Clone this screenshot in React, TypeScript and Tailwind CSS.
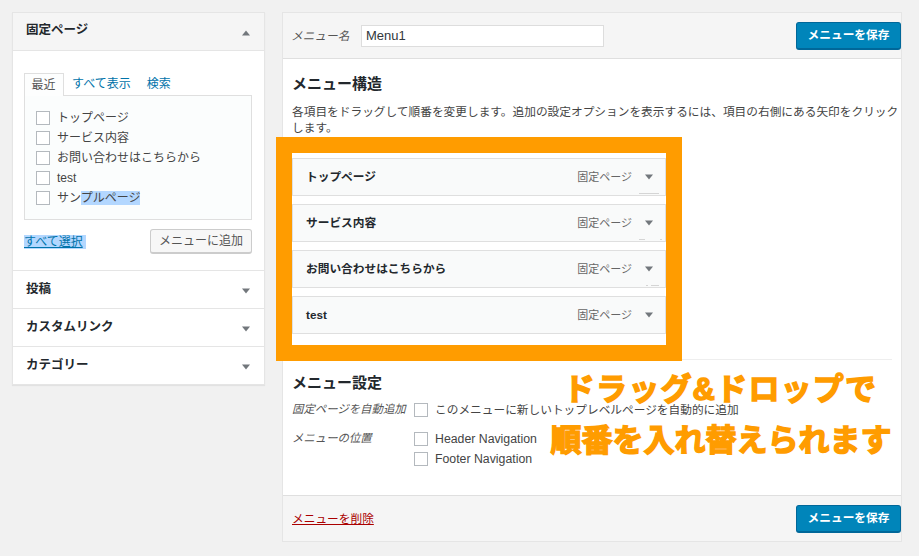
const font = { fontFamily: '"Liberation Sans","Noto Sans CJK JP",sans-serif' };

function Arrow({ up = false }: { up?: boolean }) {
  return (
    <svg width="8" height="6" viewBox="0 0 8 6" className="shrink-0">
      <path d={up ? "M4 0.5 L8 5.5 L0 5.5 Z" : "M0 0.5 L8 0.5 L4 5.5 Z"} fill="#72777c" />
    </svg>
  );
}

function Check({ className = "" }: { className?: string }) {
  return <span className={`block w-[14px] h-[14px] shrink-0 bg-white border border-[#b4b9be] ${className}`} />;
}

function SaveButton() {
  return (
    <button className="w-[105px] h-[28px] rounded-[3px] bg-[#0085ba] border border-[#006799] border-b-2 text-white text-[11.7px] font-bold flex items-center justify-center">
      メニューを保存
    </button>
  );
}

function Accordion({ title }: { title: string }) {
  return (
    <div className="h-[38px] border-t border-[#e5e5e5] pl-[13px] pr-[14px] flex items-center justify-between bg-white">
      <span className="text-[12.5px] font-bold text-[#23282d] -mt-[1px]">{title}</span>
      <span className="mt-[2px]"><Arrow /></span>
    </div>
  );
}

function MenuItem({ title, marks }: { title: string; marks: number[][] }) {
  return (
    <div className="relative h-[38px] border border-[#dfdfdf] bg-[#f9fafa] flex items-center pl-[13px] pr-[12px] mb-[8px]">
      <span className="text-[11.7px] font-bold text-[#23282d] flex-1">{title}</span>
      <span className="text-[11px] text-[#666] mr-[13px]">固定ページ</span>
      <Arrow />
      {marks.map(([right, width]) => (
        <span key={right} className="absolute bottom-[1px] h-[1px] bg-[#d5d5d5]" style={{ right, width }} />
      ))}
    </div>
  );
}

export default function App() {
  return (
    <div className="relative w-[919px] h-[556px] overflow-hidden bg-[#f1f1f1] text-[#444] flex items-start pt-[12px] pl-[12px] gap-[17px]" style={font}>
      {/* Left column */}
      <div className="w-[253px] border border-[#e5e5e5] shadow-[0_1px_1px_rgba(0,0,0,0.06)] bg-white">
        <div className="h-[38px] bg-[#f5f5f5] border-b border-[#e5e5e5] pl-[13px] pr-[14px] flex items-center justify-between">
          <span className="text-[12.5px] font-bold text-[#23282d] -mt-[2px]">固定ページ</span>
          <span className="mt-[2px]"><Arrow up /></span>
        </div>
        <div className="h-[219px] pl-[11px] pr-[12px] pt-[22px]">
          <div className="flex h-[23px] text-[12px] text-[#0073aa]">
            <span className="w-[40px] h-[23px] bg-[#fdfefe] border border-b-0 border-[#dfdfdf] text-[#555] flex items-center justify-center relative z-10 pr-[1px]">最近</span>
            <span className="ml-[8px] -mt-[1px] flex items-center">すべて表示</span>
            <span className="ml-[16px] -mt-[1px] flex items-center">検索</span>
          </div>
          <div className="h-[125px] -mt-[1px] border border-[#dfdfdf] bg-[#fbfdfd] pt-[12px] pl-[11px] text-[12px] text-[#444]">
            {["トップページ", "サービス内容", "お問い合わせはこちらから", "test"].map((t) => (
              <div key={t} className="h-[20px] flex items-center gap-[7px]"><Check /><span>{t}</span></div>
            ))}
            <div className="h-[20px] flex items-center gap-[7px]">
              <Check />
              <span>サン<span className="bg-[#b3d7ff]">プルページ</span></span>
            </div>
          </div>
          <div className="flex items-center justify-between mt-[9px]">
            <span className="text-[12px] text-[#0073aa] underline bg-[#b3d7ff] h-[14px] leading-[14px] w-[62px]">すべて選択</span>
            <button className="w-[102px] h-[25px] border border-[#cccccc] border-b-2 rounded-[3px] bg-[#f7f7f7] text-[12px] text-[#555] flex items-center justify-center">メニューに追加</button>
          </div>
        </div>
        <Accordion title="投稿" />
        <Accordion title="カスタムリンク" />
        <Accordion title="カテゴリー" />
      </div>

      {/* Right column */}
      <div className="w-[620px] h-[530px] border border-[#e5e5e5] bg-white flex flex-col">
        <div className="h-[46px] shrink-0 bg-[#f5f5f5] border-b border-[#dfdfdf] pl-[9px] flex items-center">
          <span className="text-[11.7px] italic text-[#555] w-[69px] -ml-[1px] mr-[1px]">メニュー名</span>
          <span className="w-[243px] h-[22px] bg-white border border-[#dddddd] pl-[4px] text-[13px] text-[#32373c] leading-[20px]">Menu1</span>
          <span className="ml-auto"><SaveButton /></span>
        </div>
        <div className="flex-1 px-[9px]">
          <h3 className="text-[15px] font-bold text-[#23282d] mt-[15px] leading-[20px]">メニュー構造</h3>
          <p className="text-[11.7px] leading-[16px] text-[#444] mt-[10px] w-[610px]">各項目をドラッグして順番を変更します。追加の設定オプションを表示するには、項目の右側にある矢印をクリックします。</p>
          <div className="w-[374px] mt-[17px] h-[192px] pt-[5px] bg-white">
            <MenuItem title="トップページ" marks={[[6, 20]]} />
            <MenuItem title="サービス内容" marks={[[20, 6], [3, 2]]} />
            <MenuItem title="お問い合わせはこちらから" marks={[[6, 8], [17, 2]]} />
            <MenuItem title="test" marks={[]} />
          </div>
          <div className="h-[1px] bg-[#eeeeee] mt-[14px]" />
          <h3 className="text-[15px] font-bold text-[#23282d] mt-[13px] leading-[20px]">メニュー設定</h3>
          <div className="flex mt-[7px] h-[20px] items-center text-[11.7px]">
            <span className="w-[122px] italic text-[#555] text-[11.4px]">固定ページを自動追加</span>
            <Check />
            <span className="ml-[7px] text-[#444]">このメニューに新しいトップレベルページを自動的に追加</span>
          </div>
          <div className="flex mt-[9px] text-[12.3px]">
            <span className="w-[122px] italic text-[#555] text-[11.4px] leading-[18px]">メニューの位置</span>
            <div className="flex flex-col">
              <div className="h-[20px] flex items-center gap-[7px]"><Check /><span>Header Navigation</span></div>
              <div className="h-[20px] flex items-center gap-[7px]"><Check /><span>Footer Navigation</span></div>
            </div>
          </div>
        </div>
        <div className="h-[46px] shrink-0 bg-[#f5f5f5] border-t border-[#dfdfdf] pl-[9px] flex items-center justify-between">
          <span className="text-[11.7px] text-[#a00] underline">メニューを削除</span>
          <SaveButton />
        </div>
      </div>

      {/* Orange annotation frame */}
      <div className="absolute left-[276px] top-[137px] w-[406px] h-[224px] border-[16px] border-[#ff9c00] pointer-events-none" />
      {/* Annotation text */}
      <div className="absolute left-[520px] top-[371px] w-[400px] text-center text-[#ff9c00] font-bold" style={{ fontSize: 31, WebkitTextStroke: "1.5px #ff9c00" }}>
        <div className="h-[37px] leading-[37px] pl-[1px] tracking-[1.2px]">ドラッグ&amp;ドロップで</div>
        <div className="h-[47px] leading-[47px] pl-[2px] mt-[9px]">順番を入れ替えられます</div>
      </div>
    </div>
  );
}
